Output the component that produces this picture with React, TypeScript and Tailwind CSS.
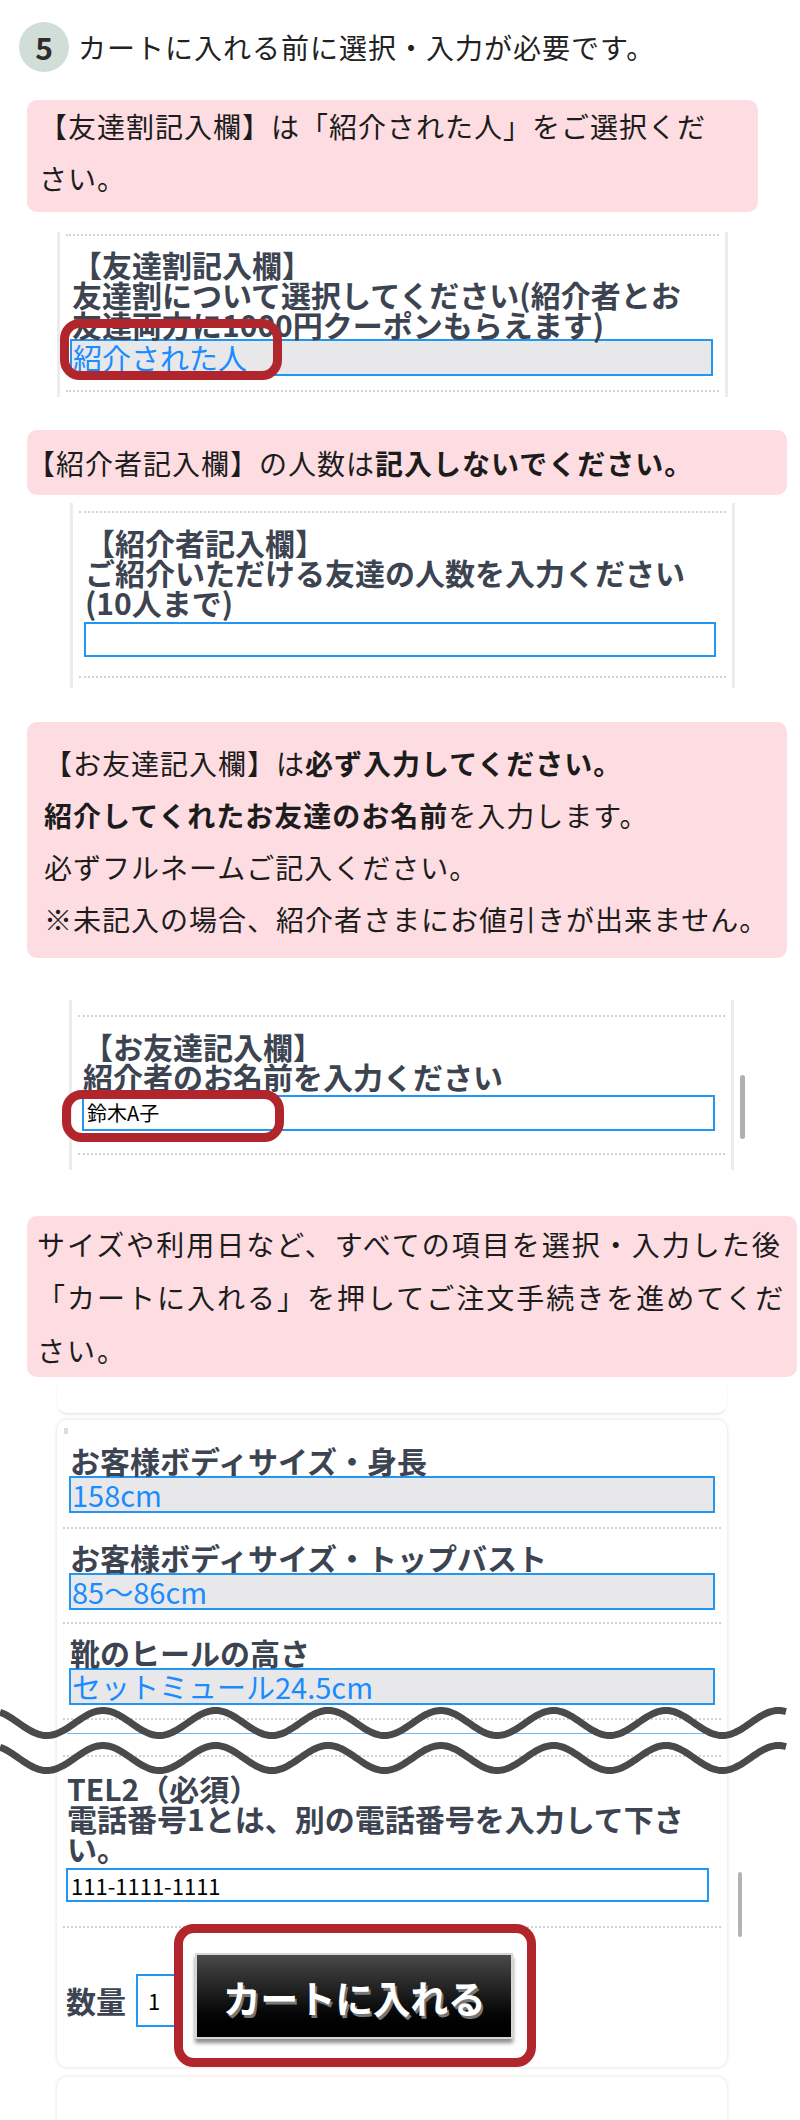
import React from 'react';

const waveD = (cy: number) => {
  let d = '';
  for (let x = 0; x <= 786; x += 2) {
    const y = cy - 12.5 * Math.cos((2 * Math.PI * (x - 103)) / 112.6);
    d += (x === 0 ? 'M' : 'L') + x + ' ' + y.toFixed(1) + ' ';
  }
  return d;
};

const Dots = ({ className = '' }: { className?: string }) => (
  <div className={`mx-[6px] border-t-2 border-dotted border-[#d2d2d2] ${className}`} />
);

const Label = ({ lines, className = '' }: { lines: string[]; className?: string }) => (
  <div className={`text-[30px] leading-[30px] font-semibold text-[#3d4451] ${className}`}>
    {lines.map((l, i) => (
      <p key={i} className="whitespace-nowrap">{l}</p>
    ))}
  </div>
);

const SelectBox = ({ value, className = '' }: { value: string; className?: string }) => (
  <div
    className={`h-[37px] border-2 border-[#2196f3] bg-[#e8e8ea] pl-[1px] text-[29px] leading-[33px] text-[#1a8cff] whitespace-nowrap ${className}`}
  >
    {value}
  </div>
);

const RedMark = ({ className = '' }: { className?: string }) => (
  <div className={`absolute border-[9px] border-[#b1262d] rounded-[20px] ${className}`} />
);

export default function App() {
  return (
    <div className="relative w-[800px] h-[2120px] overflow-hidden bg-white font-['Noto_Sans_CJK_JP',sans-serif] text-[#1c1c1c]">
      {/* step header */}
      <div className="flex items-center pl-[19px] pt-[22px]">
        <div className="w-[50px] h-[50px] rounded-full bg-[#d1ddd7] flex items-center justify-center text-[30px] font-bold text-[#2d2d2d]">
          5
        </div>
        <p className="ml-[9px] text-[28px] leading-[50px] tracking-[1px] text-[#222]">
          カートに入れる前に選択・入力が必要です。
        </p>
      </div>

      {/* note 1 */}
      <div className="mt-[28px] ml-[27px] w-[731px] h-[112px] rounded-[10px] bg-[#fddde1] pl-[12px] text-[28px] leading-[52px] tracking-[1px]">
        <p className="whitespace-nowrap">【友達割記入欄】は「紹介された人」をご選択くだ</p>
        <p className="whitespace-nowrap">さい。</p>
      </div>

      {/* form 1 */}
      <div className="relative flow-root mt-[20px] ml-[57px] w-[671px] h-[165px] border-x-[3px] border-[#ececec] bg-white">
        <Dots className="mt-[2px]" />
        <Label className="mt-[13px] pl-[12px]" lines={['【友達割記入欄】', '友達割について選択してください(紹介者とお', '友達両方に1000円クーポンもらえます)']} />
        <SelectBox value="紹介された人" className="ml-[10px] w-[643px]" />
        <Dots className="mt-[14px]" />
        <RedMark className="left-0 top-[87px] w-[222px] h-[61px]" />
      </div>

      {/* note 2 */}
      <div className="mt-[33px] ml-[27px] w-[760px] h-[65px] rounded-[10px] bg-[#fddde1] flex items-center text-[28px] tracking-[1px]">
        <p className="whitespace-nowrap">
          【紹介者記入欄】の人数は<b className="font-bold">記入しないでください。</b>
        </p>
      </div>

      {/* form 2 */}
      <div className="relative flow-root mt-[8px] ml-[70px] w-[665px] h-[185px] border-x-[3px] border-[#ececec]">
        <Dots className="mt-[8px]" />
        <Label className="mt-[14px] pl-[12px]" lines={['【紹介者記入欄】', 'ご紹介いただける友達の人数を入力ください', '(10人まで)']} />
        <div className="mt-[5px] ml-[11px] w-[632px] h-[35px] border-2 border-[#2196f3] bg-white" />
        <Dots className="mt-[19px]" />
      </div>

      {/* note 3 */}
      <div className="mt-[34px] ml-[27px] w-[760px] h-[236px] rounded-[10px] bg-[#fddde1] pl-[17px] pt-[15px] text-[28px] leading-[52px] tracking-[1px]">
        <p className="whitespace-nowrap">
          【お友達記入欄】は<b className="font-bold">必ず入力してください。</b>
        </p>
        <p className="whitespace-nowrap">
          <b className="font-bold">紹介してくれたお友達のお名前</b>を入力します。
        </p>
        <p className="whitespace-nowrap">必ずフルネームご記入ください。</p>
        <p className="whitespace-nowrap">※未記入の場合、紹介者さまにお値引きが出来ません。</p>
      </div>

      {/* form 3 */}
      <div className="relative flow-root mt-[42px] ml-[69px] w-[665px] h-[170px] border-x-[3px] border-[#ececec]">
        <Dots className="mt-[15px]" />
        <Label className="mt-[14px] pl-[11px]" lines={['【お友達記入欄】', '紹介者のお名前を入力ください']} />
        <div className="mt-[4px] ml-[10px] w-[633px] h-[36px] border-2 border-[#2196f3] bg-white pl-[3px] text-[20px] leading-[32px] text-black">
          鈴木A子
        </div>
        <Dots className="mt-[22px]" />
        <RedMark className="-left-[10px] top-[90px] w-[222px] h-[52px]" />
        <div className="absolute left-[668px] top-[75px] w-[5px] h-[64px] rounded-full bg-[#b0b0b0]" />
      </div>

      {/* note 4 */}
      <div className="mt-[46px] ml-[27px] w-[770px] h-[161px] rounded-[10px] bg-[#fddde1] pl-[10px] pt-[2px] text-[28px] leading-[53px] tracking-[2px]">
        <p className="whitespace-nowrap">サイズや利用日など、すべての項目を選択・入力した後</p>
        <p className="whitespace-nowrap">「カートに入れる」を押してご注文手続きを進めてくだ</p>
        <p className="whitespace-nowrap">さい。</p>
      </div>

      {/* end of previous card */}
      <div className="mt-[2px] ml-[57px] w-[670px] h-[34px] rounded-b-[10px] bg-white shadow-[0_2px_3px_-1px_rgba(0,0,0,0.14)]" />

      {/* product card */}
      <div className="relative flow-root mt-[7px] ml-[57px] w-[670px] h-[647px] rounded-[10px] bg-white shadow-[0_0_4px_rgba(0,0,0,0.14)]">
        <div className="absolute left-[7px] top-[8px] w-[4px] h-[6px] bg-[#dcdcdc]" />
        <Label className="mt-[25px] pl-[13px]" lines={['お客様ボディサイズ・身長']} />
        <SelectBox value="158cm" className="mt-[1px] ml-[12px] w-[646px]" />
        <Dots className="mt-[14px]" />
        <Label className="mt-[13px] pl-[13px]" lines={['お客様ボディサイズ・トップバスト']} />
        <SelectBox value="85〜86cm" className="mt-[1px] ml-[12px] w-[646px]" />
        <Dots className="mt-[12px]" />
        <Label className="mt-[13px] pl-[13px]" lines={['靴のヒールの高さ']} />
        <SelectBox value="セットミュール24.5cm" className="mt-[1px] ml-[12px] w-[646px]" />
        <Dots className="mt-[13px]" />
        <div className="mt-[13px] mx-[10px] h-[1px] bg-[#6fb8f5]" />
        <Dots className="mt-[21px]" />
        <Label className="mt-[16px] pl-[10px]" lines={['TEL2（必須）', '電話番号1とは、別の電話番号を入力して下さ', 'い。']} />
        <div className="mt-[5px] ml-[9px] w-[643px] h-[34px] border-2 border-[#2196f3] bg-white pl-[3px] text-[22px] leading-[30px] text-black">
          111-1111-1111
        </div>
        <Dots className="mt-[24px]" />
        <div className="mt-[46px] pl-[9px] flex items-center h-[53px]">
          <span className="text-[30px] leading-[53px] font-bold text-[#3d4451]">数量</span>
          <div className="ml-[10px] w-[60px] h-[53px] border-2 border-[#2196f3] bg-white pl-[10px] text-[22px] leading-[49px] text-black">
            1
          </div>
        </div>
        <div className="absolute left-[681px] top-[452px] w-[4px] h-[65px] rounded-full bg-[#b3b3b3]" />

        {/* highlighted cart button */}
        <div className="absolute left-[117px] top-[504px] w-[362px] h-[143px] rounded-[20px] border-[9px] border-[#b1262d] bg-white">
          <button className="ml-[12px] mt-[20px] w-[318px] h-[86px] border-2 border-[#d6d6d6] bg-gradient-to-b from-[#4a4a4a] via-[#1a1a1a] to-black shadow-[0_4px_4px_rgba(0,0,0,0.45)] text-[38px] font-bold text-white [text-shadow:2px_3px_0_#777] tracking-[-0.5px]">
            カートに入れる
          </button>
        </div>
      </div>

      {/* next card top */}
      <div className="mt-[10px] ml-[57px] w-[670px] h-[60px] rounded-t-[10px] bg-white shadow-[0_0_4px_rgba(0,0,0,0.12)]" />

      {/* cut marks */}
      <svg className="absolute left-0 top-[1690px]" width="800" height="100" viewBox="0 0 800 100">
        <path d={waveD(33)} fill="none" stroke="#4a4a4a" strokeWidth="7" />
        <path d={waveD(68)} fill="none" stroke="#4a4a4a" strokeWidth="7" />
      </svg>
    </div>
  );
}
